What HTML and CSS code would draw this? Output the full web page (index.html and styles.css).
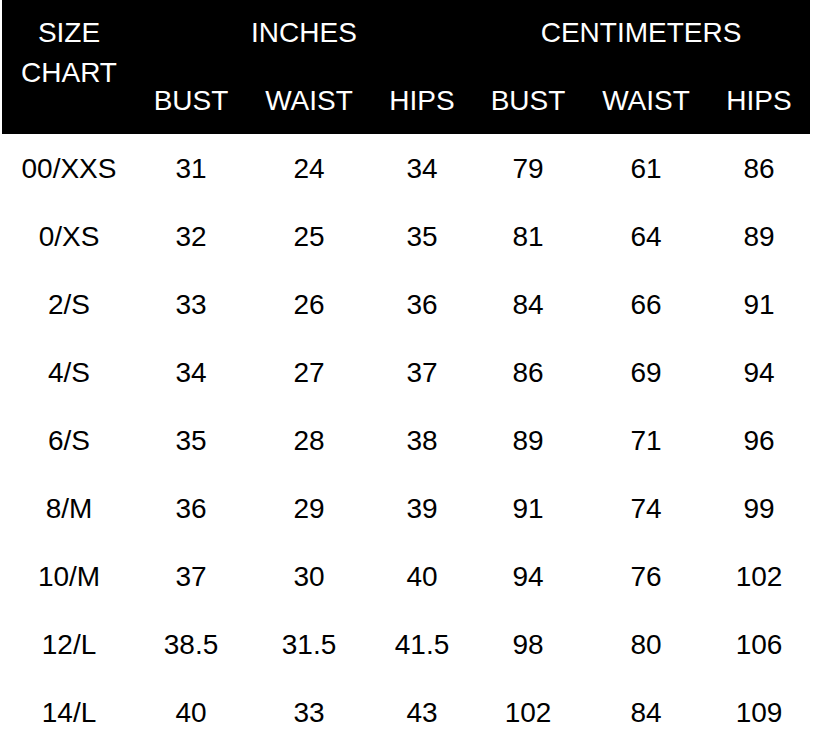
FILE: index.html
```html
<!DOCTYPE html>
<html>
<head>
<meta charset="utf-8">
<link rel="stylesheet" href="styles.css">
</head>
<body>
<table class="chart">
  <colgroup>
    <col class="c-size">
    <col class="c-ib">
    <col class="c-iw">
    <col class="c-ih">
    <col class="c-cb">
    <col class="c-cw">
    <col class="c-ch">
  </colgroup>
  <thead>
    <tr class="h1">
      <th rowspan="2" class="size-head">SIZE<br>CHART</th>
      <th colspan="3">INCHES</th>
      <th colspan="3">CENTIMETERS</th>
    </tr>
    <tr class="h2">
      <th>BUST</th><th>WAIST</th><th>HIPS</th>
      <th>BUST</th><th>WAIST</th><th>HIPS</th>
    </tr>
  </thead>
  <tbody>
    <tr><td>00/XXS</td><td>31</td><td>24</td><td>34</td><td>79</td><td>61</td><td>86</td></tr>
    <tr><td>0/XS</td><td>32</td><td>25</td><td>35</td><td>81</td><td>64</td><td>89</td></tr>
    <tr><td>2/S</td><td>33</td><td>26</td><td>36</td><td>84</td><td>66</td><td>91</td></tr>
    <tr><td>4/S</td><td>34</td><td>27</td><td>37</td><td>86</td><td>69</td><td>94</td></tr>
    <tr><td>6/S</td><td>35</td><td>28</td><td>38</td><td>89</td><td>71</td><td>96</td></tr>
    <tr><td>8/M</td><td>36</td><td>29</td><td>39</td><td>91</td><td>74</td><td>99</td></tr>
    <tr><td>10/M</td><td>37</td><td>30</td><td>40</td><td>94</td><td>76</td><td>102</td></tr>
    <tr><td>12/L</td><td>38.5</td><td>31.5</td><td>41.5</td><td>98</td><td>80</td><td>106</td></tr>
    <tr><td>14/L</td><td>40</td><td>33</td><td>43</td><td>102</td><td>84</td><td>109</td></tr>
  </tbody>
</table>
</body>
</html>
```
FILE: styles.css
```css
html, body {
  margin: 0;
  padding: 0;
  background: #fff;
}

.chart {
  margin-left: 2px;
  width: 808px;
  table-layout: fixed;
  border-collapse: collapse;
  border-spacing: 0;
  font-family: "Liberation Sans", Arial, sans-serif;
  font-size: 28px;
  color: #000;
}

.c-size { width: 134px; }
.c-ib { width: 110px; }
.c-iw { width: 126px; }
.c-ih { width: 100px; }
.c-cb { width: 112px; }
.c-cw { width: 124px; }
.c-ch { width: 102px; }

.chart th,
.chart td {
  padding: 0;
  text-align: center;
  vertical-align: middle;
  font-weight: normal;
  white-space: nowrap;
}

.chart thead {
  background: #000;
  color: #fff;
}

.chart .h1 { height: 66px; }
.chart .h2 { height: 68px; }

.chart .h2 th {
  padding-top: 2px;
}

.chart .size-head {
  vertical-align: top;
  padding-top: 13px;
  line-height: 40px;
}

.chart tbody tr { height: 68px; }

.chart tbody td {
  padding-top: 2px;
}
```
